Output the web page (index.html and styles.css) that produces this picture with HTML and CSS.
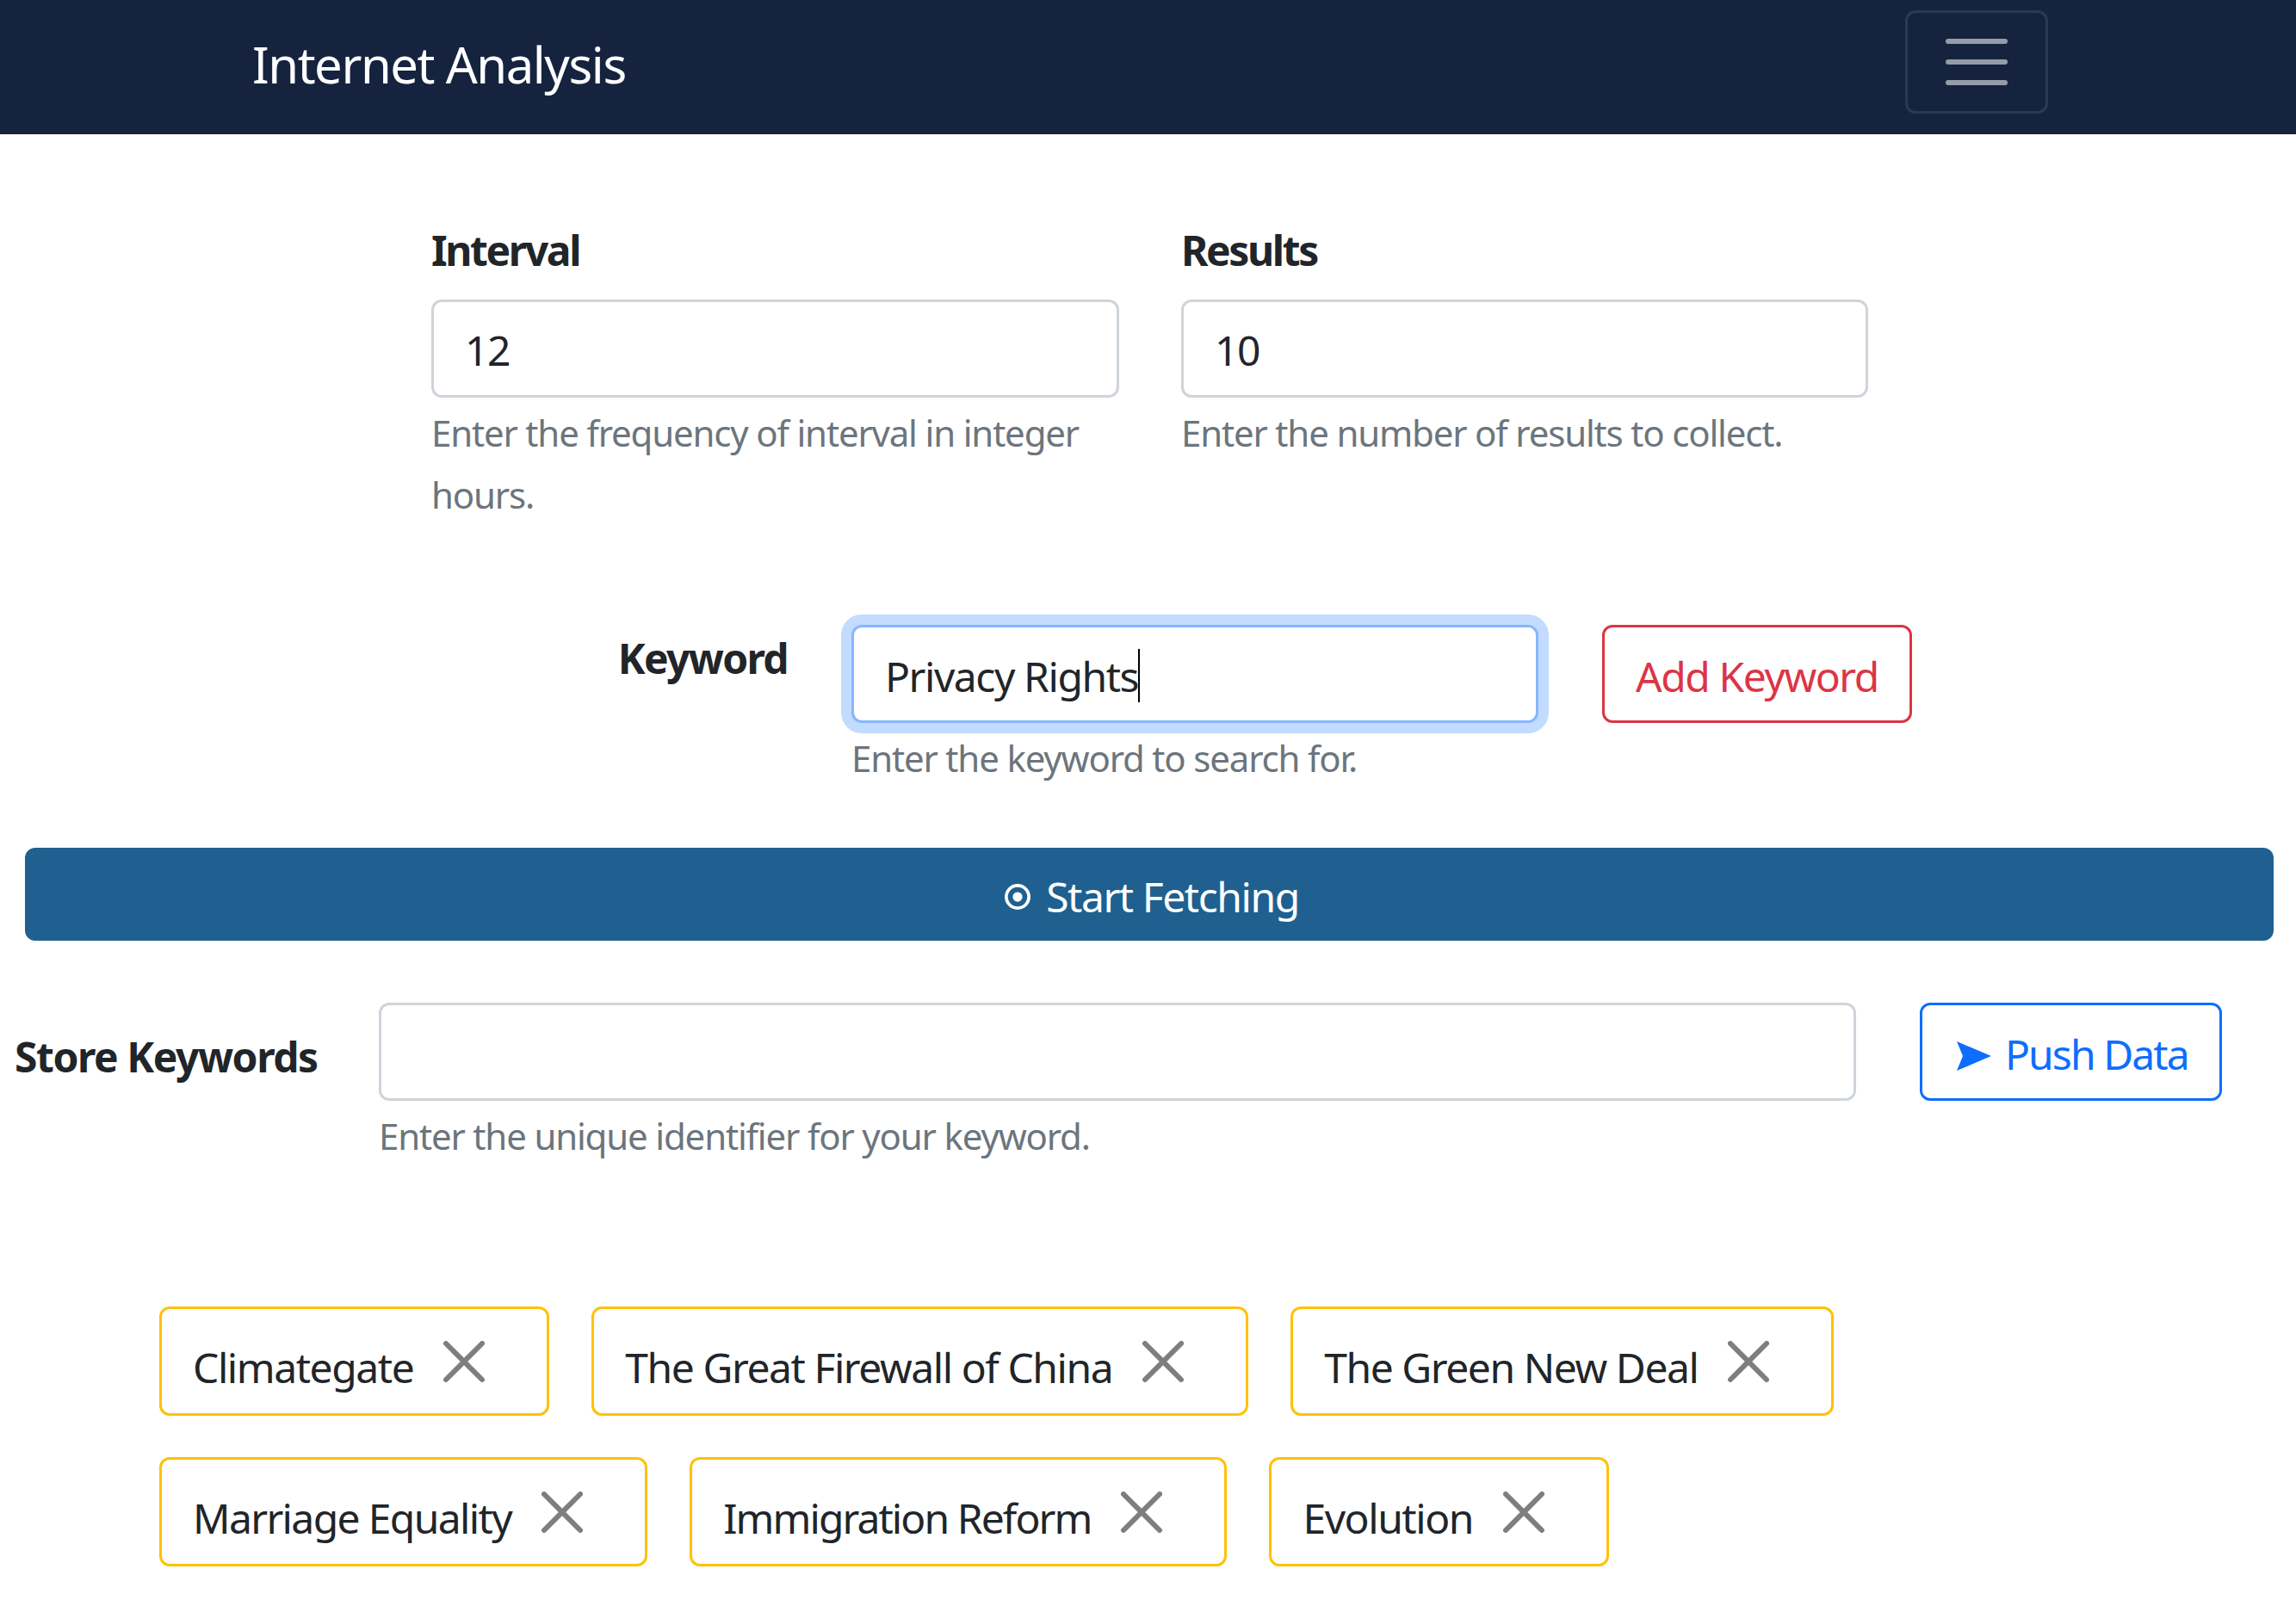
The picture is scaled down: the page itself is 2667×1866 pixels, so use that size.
FILE: index.html
```html
<!DOCTYPE html>
<html lang="en">
<head>
    <meta charset="UTF-8">
    <meta name="viewport" content="width=device-width, initial-scale=1.0">
    <title>Internet Analysis</title>
    <link rel="stylesheet" href="styles.css">
</head>
<body>

<nav class="navbar">
    <a class="brand" href="#">Internet Analysis</a>
    <button class="toggler" type="button" aria-label="Toggle navigation">
        <svg class="toggler-icon" viewBox="0 0 30 30"><path d="M4 7h22M4 15h22M4 23h22"/></svg>
    </button>
</nav>

<div class="fields">
    <div>
        <label class="field-label" for="interval">Interval</label>
        <input class="form-control" type="text" id="interval" value="12">
        <div class="help">Enter the frequency of interval in integer hours.</div>
    </div>
    <div>
        <label class="field-label" for="results">Results</label>
        <input class="form-control" type="text" id="results" value="10">
        <div class="help">Enter the number of results to collect.</div>
    </div>
</div>

<div class="keyword-row">
    <div class="field-label keyword-label">Keyword</div>
    <div>
        <div class="form-control focused">Privacy Rights<span class="caret"></span></div>
        <div class="help">Enter the keyword to search for.</div>
    </div>
    <button class="btn btn-red" type="button">Add Keyword</button>
</div>

<button class="start-btn" type="button">
    <svg class="start-icon" viewBox="0 0 16 16"><circle cx="8" cy="8" r="7" fill="none" stroke="#fff" stroke-width="2"/><circle cx="8" cy="8" r="3" fill="#fff"/></svg>
    Start Fetching
</button>

<div class="store-row">
    <label class="field-label store-label" for="store">Store Keywords</label>
    <div>
        <input class="form-control" type="text" id="store">
        <div class="help">Enter the unique identifier for your keyword.</div>
    </div>
    <button class="btn btn-blue" type="button">
        <svg class="send-icon" viewBox="0 0 40 34"><path d="M0 0 40 17 0 34 7 17z"/></svg>
        Push Data
    </button>
</div>

<div class="tags">
    <div class="tag">Climategate<svg class="close" viewBox="0 0 16 16"><path d="M.293.293a1 1 0 0 1 1.414 0L8 6.586 14.293.293a1 1 0 1 1 1.414 1.414L9.414 8l6.293 6.293a1 1 0 0 1-1.414 1.414L8 9.414l-6.293 6.293a1 1 0 0 1-1.414-1.414L6.586 8 .293 1.707a1 1 0 0 1 0-1.414z"/></svg></div>
    <div class="tag">The Great Firewall of China<svg class="close" viewBox="0 0 16 16"><path d="M.293.293a1 1 0 0 1 1.414 0L8 6.586 14.293.293a1 1 0 1 1 1.414 1.414L9.414 8l6.293 6.293a1 1 0 0 1-1.414 1.414L8 9.414l-6.293 6.293a1 1 0 0 1-1.414-1.414L6.586 8 .293 1.707a1 1 0 0 1 0-1.414z"/></svg></div>
    <div class="tag">The Green New Deal<svg class="close" viewBox="0 0 16 16"><path d="M.293.293a1 1 0 0 1 1.414 0L8 6.586 14.293.293a1 1 0 1 1 1.414 1.414L9.414 8l6.293 6.293a1 1 0 0 1-1.414 1.414L8 9.414l-6.293 6.293a1 1 0 0 1-1.414-1.414L6.586 8 .293 1.707a1 1 0 0 1 0-1.414z"/></svg></div>
    <div class="tag tag-snug">Marriage Equality<svg class="close" viewBox="0 0 16 16"><path d="M.293.293a1 1 0 0 1 1.414 0L8 6.586 14.293.293a1 1 0 1 1 1.414 1.414L9.414 8l6.293 6.293a1 1 0 0 1-1.414 1.414L8 9.414l-6.293 6.293a1 1 0 0 1-1.414-1.414L6.586 8 .293 1.707a1 1 0 0 1 0-1.414z"/></svg></div>
    <div class="tag tag-tight">Immigration Reform<svg class="close" viewBox="0 0 16 16"><path d="M.293.293a1 1 0 0 1 1.414 0L8 6.586 14.293.293a1 1 0 1 1 1.414 1.414L9.414 8l6.293 6.293a1 1 0 0 1-1.414 1.414L8 9.414l-6.293 6.293a1 1 0 0 1-1.414-1.414L6.586 8 .293 1.707a1 1 0 0 1 0-1.414z"/></svg></div>
    <div class="tag">Evolution<svg class="close" viewBox="0 0 16 16"><path d="M.293.293a1 1 0 0 1 1.414 0L8 6.586 14.293.293a1 1 0 1 1 1.414 1.414L9.414 8l6.293 6.293a1 1 0 0 1-1.414 1.414L8 9.414l-6.293 6.293a1 1 0 0 1-1.414-1.414L6.586 8 .293 1.707a1 1 0 0 1 0-1.414z"/></svg></div>
</div>

</body>
</html>
```

FILE: styles.css
```css
* {
    box-sizing: border-box;
}
body {
    margin: 0;
    background-color: #fff;
    color: #212529;
    font-family: "Noto Sans", Arial, sans-serif;
    font-size: 48px;
    line-height: 72px;
    letter-spacing: -0.03em;
}
.navbar {
    height: 156px;
    padding: 0 288px 0 293px;
    display: flex;
    align-items: center;
    justify-content: space-between;
    background-color: #15233f;
}
.brand {
    margin-top: -6px;
    color: #fff;
    font-size: 58px;
    text-decoration: none;
}
.toggler {
    width: 166px;
    height: 120px;
    padding: 12px 36px;
    margin-top: -12px;
    background: transparent;
    border: 3px solid rgba(255, 255, 255, .1);
    border-radius: 12px;
    display: flex;
    align-items: center;
    justify-content: center;
}
.toggler-icon {
    width: 90px;
    height: 90px;
    flex: none;
    fill: none;
    stroke: rgba(255, 255, 255, .55);
    stroke-width: 2;
    stroke-linecap: round;
}
.fields {
    display: grid;
    grid-template-columns: 799px 798px;
    gap: 72px;
    margin: 96px 0 0 501px;
}
.field-label {
    display: block;
    padding-top: 3px;
    margin-bottom: 21px;
    font-weight: 700;
}
.fields .field-label {
    letter-spacing: -0.05em;
}
.form-control {
    display: block;
    width: 100%;
    height: 114px;
    padding: 19px 36px 17px;
    border: 3px solid #ced4da;
    border-radius: 12px;
    background: #fff;
    color: #212529;
    font: inherit;
    letter-spacing: inherit;
    outline: none;
}
.focused {
    padding-top: 21px;
    border-color: #86b7fe;
    box-shadow: 0 0 0 12px #c2dbfe;
}
.caret {
    display: inline-block;
    width: 2px;
    height: 62px;
    margin: 0 0 -12px 0;
    background-color: #000;
}
.help {
    margin-top: 5px;
    color: #6c757d;
    font-size: 42px;
    letter-spacing: -0.028em;
}
.keyword-row {
    display: grid;
    grid-template-columns: 915px 798px auto;
    justify-content: start;
    column-gap: 74px;
    margin-top: 115px;
}
.keyword-label {
    margin: 0;
    text-align: right;
    letter-spacing: -0.035em;
}
.btn {
    height: 114px;
    padding: 21px 36px 15px;
    border: 3px solid;
    border-radius: 12px;
    background: #fff;
    font: inherit;
    letter-spacing: inherit;
    display: flex;
    align-items: center;
    white-space: nowrap;
}
.btn-red {
    color: #dc3545;
    border-color: #dc3545;
}
.btn-blue {
    color: #0d6efd;
    border-color: #0d6efd;
    fill: #0d6efd;
    letter-spacing: -0.04em;
}
.start-btn {
    width: 2612px;
    height: 108px;
    margin: 68px 0 0 29px;
    padding: 6px 0 0 6px;
    border: none;
    border-radius: 12px;
    background-color: #1f6090;
    color: #fff;
    font: inherit;
    letter-spacing: inherit;
    display: flex;
    align-items: center;
    justify-content: center;
    gap: 18px;
}
.start-icon {
    width: 30px;
    height: 30px;
}
.store-row {
    display: grid;
    grid-template-columns: 349px 1716px auto;
    justify-content: start;
    column-gap: 74px;
    margin: 72px 0 0 17px;
}
.store-label {
    margin: 24px 0 0;
    white-space: nowrap;
}
.send-icon {
    width: 40px;
    height: 34px;
    margin: 3px 16px 0 4px;
}
.tags {
    display: flex;
    flex-wrap: wrap;
    gap: 48px 49px;
    margin: 162px 0 0 185px;
}
.tag {
    display: flex;
    align-items: flex-start;
    height: 127px;
    padding: 32px 72px 16px 36px;
    border: 3px solid #ffc107;
    border-radius: 12px;
    white-space: nowrap;
}
.tag-snug {
    letter-spacing: -0.034em;
}
.tag-tight {
    letter-spacing: -0.04em;
}
.close {
    width: 48px;
    height: 48px;
    margin: 5px 0 0 35px;
    fill: #000;
    opacity: .5;
}
```
